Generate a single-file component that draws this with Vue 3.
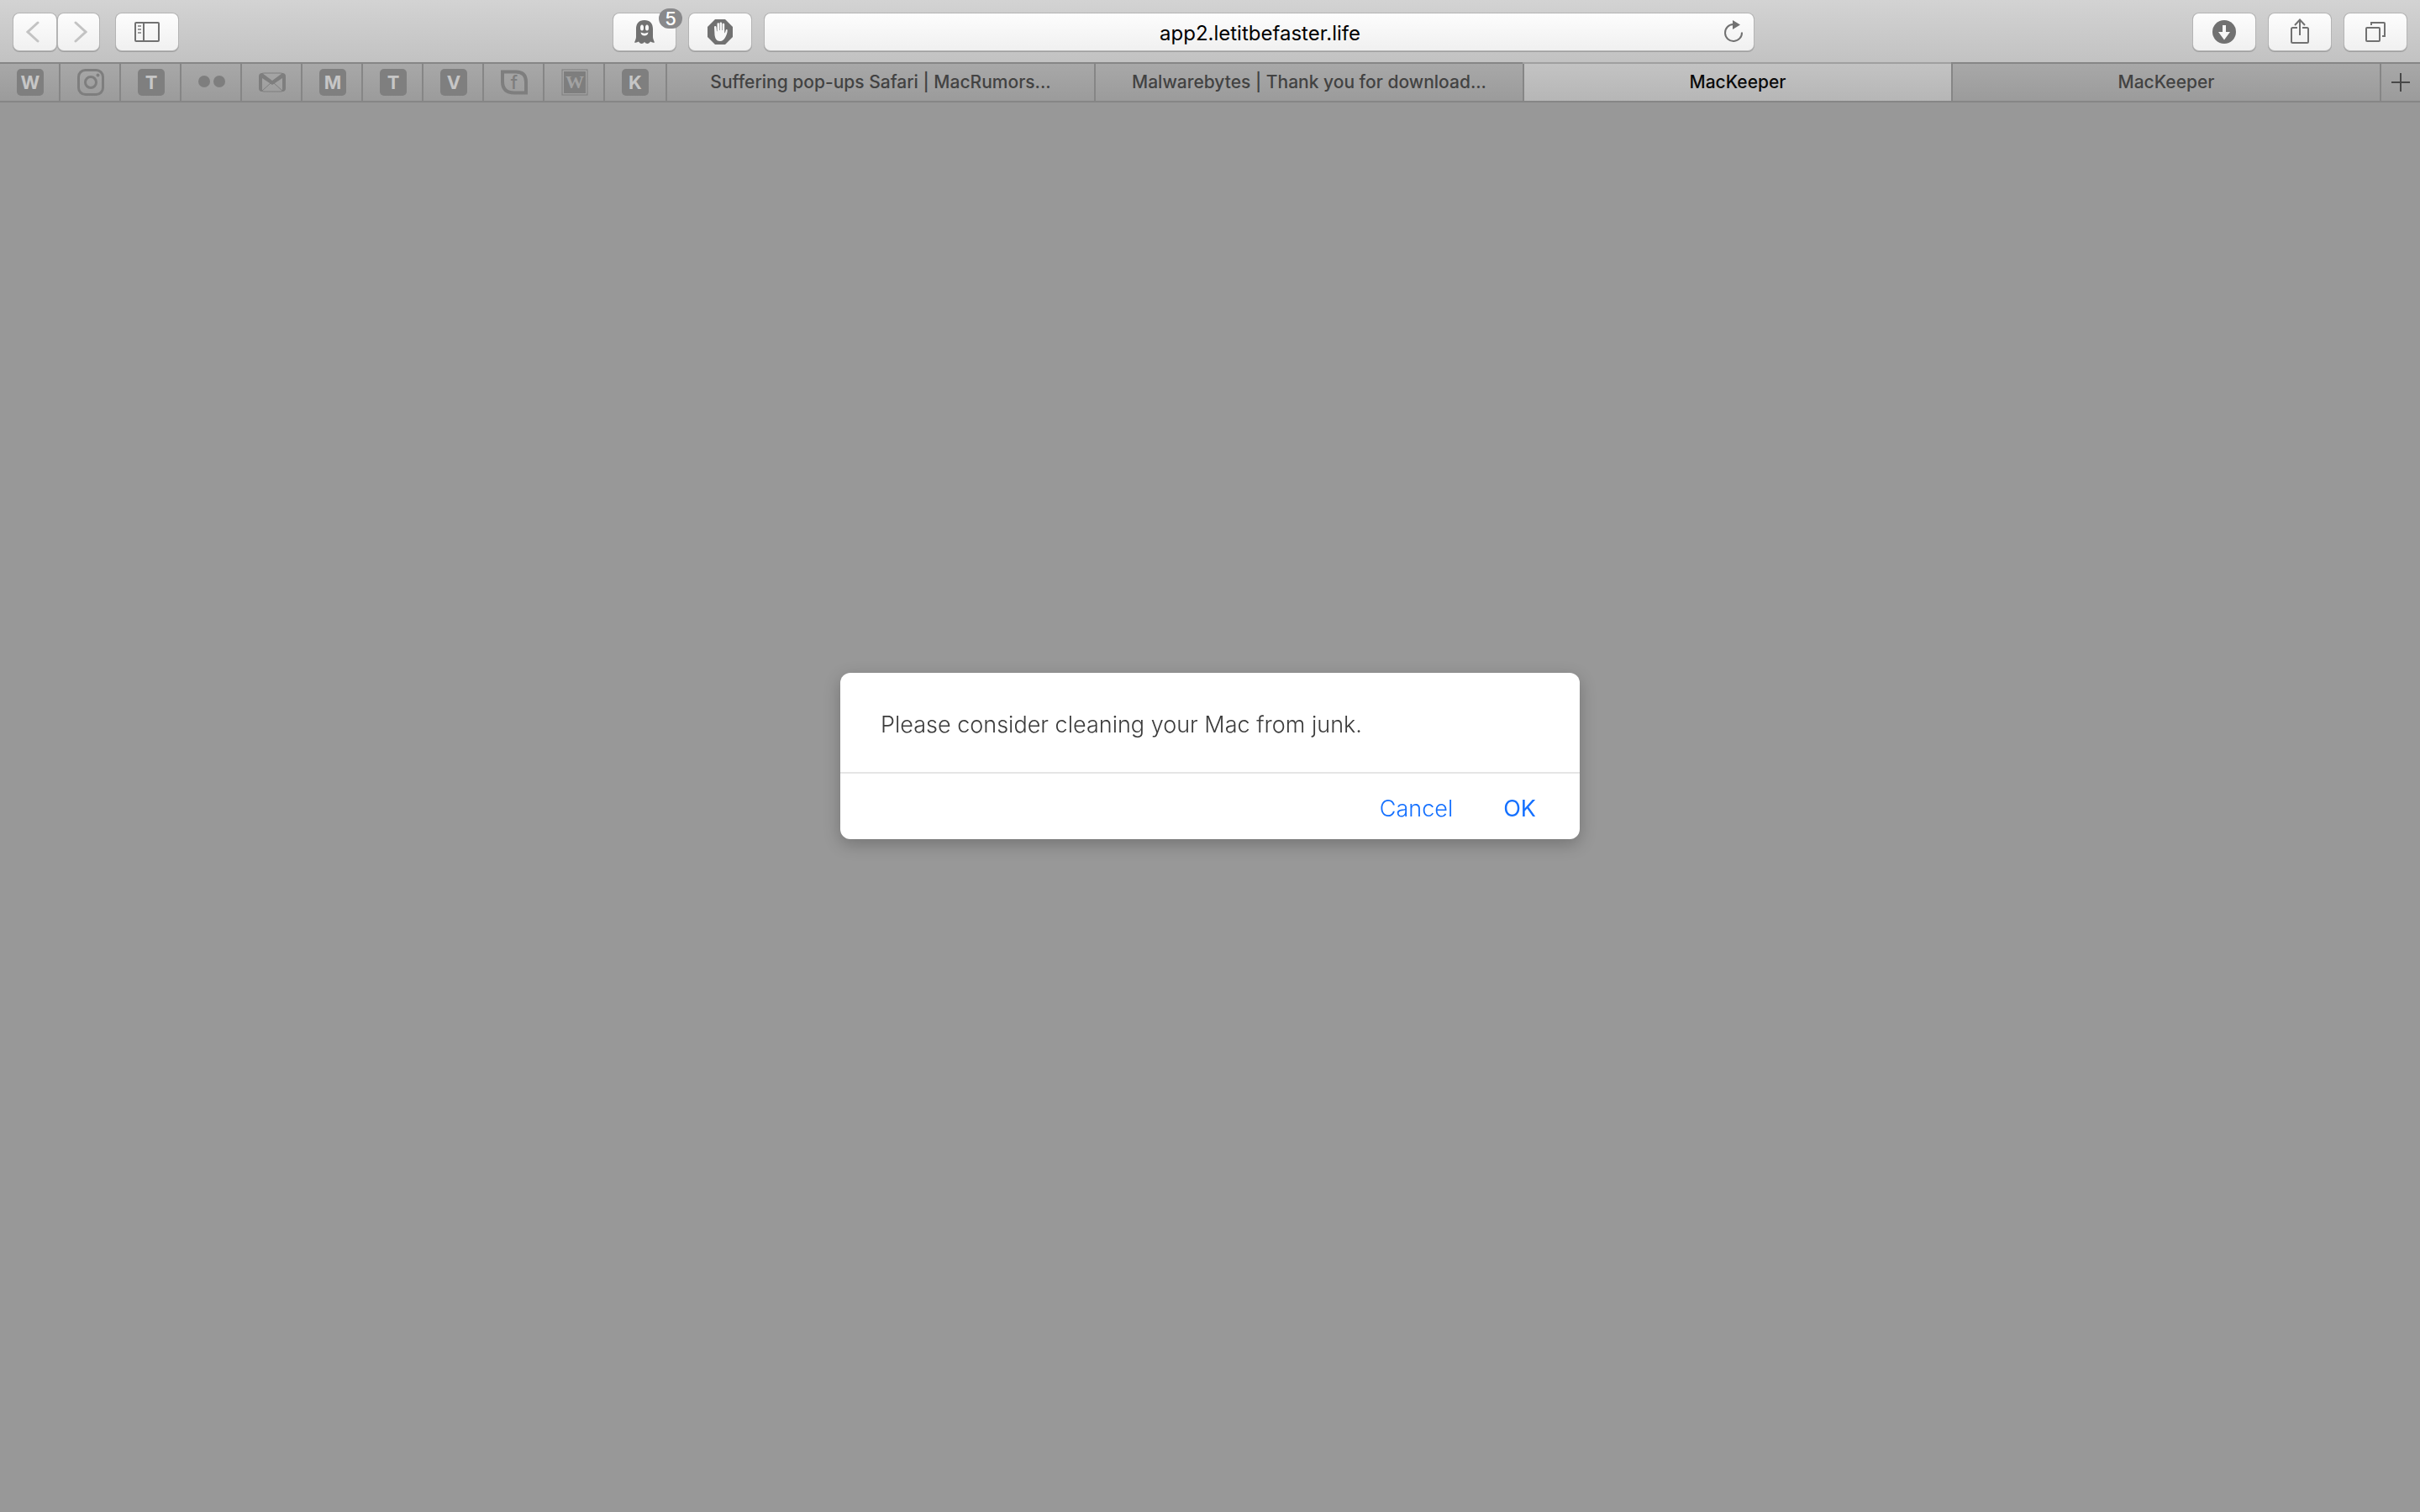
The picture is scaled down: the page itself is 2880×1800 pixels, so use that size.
<template>
  <div class="browser">
    <header class="toolbar">
      <div class="group left">
        <div class="history">
          <button class="btn back" aria-label="Back">
            <svg width="16" height="26" viewBox="0 0 16 26"><path class="chevron" d="M14 2 2 13l12 11" /></svg>
          </button>
          <button class="btn forward" aria-label="Forward">
            <svg width="16" height="26" viewBox="0 0 16 26"><path class="chevron" d="M2 2l12 11L2 24" /></svg>
          </button>
        </div>
        <button class="btn" aria-label="Sidebar">
          <svg width="30" height="24" viewBox="0 0 30 24">
            <rect class="line" x="1" y="1" width="28" height="22" rx="1" />
            <path class="line" d="M11 1v22" />
            <path class="line faint" d="M4 5h4M4 9h4M4 13h4" />
          </svg>
        </button>
      </div>

      <div class="group middle">
        <button class="btn" aria-label="Ghostery, 5 trackers">
          <svg width="24" height="28" viewBox="0 0 24 28">
            <path
              class="solid"
              d="M12 0C5.500 0 2 4 2 10.500V20c0 2-1 4-2 6.500 2 .5 3.500 0 5-1 1 1.500 2 2.500 3.500 2.500 1.500 0 2.500-.8 3.500-2 1 1.200 2 2 3.500 2S18 27 19 25.500c1.500 1 3 1.500 5 1-1-2.500-2-4.500-2-6.500v-9.500C22 4 18.500 0 12 0z"
            />
            <ellipse class="hole" cx="9" cy="9" rx="2" ry="3.500" />
            <ellipse class="hole" cx="15" cy="9" rx="2" ry="3.500" />
            <path class="hole" d="M7.500 14.500c3 1.500 6 1.500 9 0-.3 2.500-2 4-4.500 4s-4.200-1.500-4.500-4z" />
          </svg>
          <span class="badge">5</span>
        </button>
        <button class="btn" aria-label="AdBlock">
          <svg width="30" height="30" viewBox="0 0 30 30">
            <path class="solid" d="M9 0h12l9 9v12l-9 9H9l-9-9V9z" />
            <path
              class="hole"
              d="M8 9.200c0-1.700 2.300-1.700 2.500 0l.5 5h.5V5.500c0-1.800 2.500-1.800 2.500 0V13h.6V4.800c0-1.800 2.500-1.800 2.500 0V13h.6V6c0-1.800 2.500-1.800 2.500 0v10.500c.8-.5 1.200-1.800 1.500-3.200.4-1.700 1.800-1.700 2-.5.1 3-1 6-2.700 9-1.500 2.700-3.200 4.200-6 4.200-4.500 0-6-3.500-6.500-7.500z"
            />
          </svg>
        </button>
        <div class="address">
          <input v-model="url" type="text" aria-label="Address" spellcheck="false" />
          <button class="reload" aria-label="Reload">
            <svg width="24" height="28" viewBox="0 0 24 28">
              <path class="line" d="M22 14.500A10 10 0 1 1 11.500 5" />
              <path class="solid" d="M11 0l9 5.500-9 5.500z" />
            </svg>
          </button>
        </div>
      </div>

      <div class="group">
        <button class="btn" aria-label="Downloads">
          <svg width="28" height="28" viewBox="0 0 28 28">
            <circle class="solid" cx="14" cy="14" r="14" />
            <path class="hole" d="M12 6h4v8h5l-7 9.500L7 14h5z" />
          </svg>
        </button>
        <button class="btn" aria-label="Share">
          <svg width="22" height="32" viewBox="0 0 22 32">
            <path class="line" d="M8 11H2.500Q1 11 1 12.500v15Q1 29 2.500 29h17q1.500 0 1.500-1.500v-15Q21 11 19.500 11H14" />
            <path class="line" d="M11 20V2M5 8l6-6.500L17 8" />
          </svg>
        </button>
        <button class="btn" aria-label="Show all tabs">
          <svg width="24" height="24" viewBox="0 0 24 24">
            <rect class="line" x="1" y="7" width="16" height="16" rx="1" />
            <path class="line" d="M7 4V1h15q1 0 1 1v15h-3" />
          </svg>
        </button>
      </div>
    </header>

    <nav class="tabbar">
      <div class="pins">
        <button v-for="(pin, i) in pins" :key="i" class="pin" :aria-label="pin.name">
          <span v-if="pin.letter" class="letter">{{ pin.letter }}</span>
          <svg v-else-if="pin.icon === 'instagram'" width="32" height="32" viewBox="0 0 32 32">
            <rect class="mark" x="1.500" y="1.500" width="29" height="29" rx="8" />
            <circle class="mark" cx="16" cy="16" r="6.500" />
            <circle class="fill" cx="24.500" cy="7.500" r="2" />
          </svg>
          <svg v-else-if="pin.icon === 'flickr'" width="32" height="16" viewBox="0 0 32 16">
            <circle class="fill" cx="7" cy="7" r="7" />
            <circle class="fill" cx="25" cy="7" r="7" />
          </svg>
          <svg v-else-if="pin.icon === 'mail'" width="32" height="24" viewBox="0 0 32 24">
            <rect class="mark thin" x="1" y="1" width="30" height="22" rx="5" />
            <path class="fill" d="M4 1a4 4 0 0 0-4 4v14a4 4 0 0 0 4 4V7l12 8 12-8v16a4 4 0 0 0 4-4V5a4 4 0 0 0-4-4L16 10z" />
            <path class="mark thin" d="M4 22l10-9M28 22l-10-9" />
          </svg>
          <svg v-else-if="pin.icon === 'leaf'" width="32" height="30" viewBox="0 0 32 30">
            <path class="mark leaf" d="M2 2.500H18q12 0 12 12V27.500H16Q2 27.500 2 14z" />
            <text class="leaf-f" x="16" y="23">f</text>
          </svg>
          <svg v-else width="32" height="32" viewBox="0 0 32 32">
            <rect class="mark thin" x="1" y="1" width="30" height="30" />
            <rect class="fill" x="3" y="3" width="26" height="26" />
            <text class="serif-w" x="16" y="23">W</text>
          </svg>
        </button>
      </div>
      <button
        v-for="(tab, i) in tabs"
        :key="i"
        class="tab"
        :class="{ active: i === current }"
        @click="current = i"
      >{{ tab }}</button>
      <button class="add" aria-label="New tab">
        <svg width="22" height="22" viewBox="0 0 22 22"><path class="plus" d="M11 0v22M0 11h22" /></svg>
      </button>
    </nav>

    <main class="page">
      <div v-if="open" class="overlay">
        <div class="dialog" role="alertdialog" aria-labelledby="message">
          <p id="message">Please consider cleaning your Mac from junk.</p>
          <div class="actions">
            <button @click="open = false">Cancel</button>
            <button class="ok" @click="open = false">OK</button>
          </div>
        </div>
      </div>
    </main>
  </div>
</template>

<script setup>
import { ref } from "vue"

const url = ref("app2.letitbefaster.life")
const current = ref(2)
const open = ref(true)

const pins = [
  { name: "W", letter: "W" },
  { name: "Instagram", icon: "instagram" },
  { name: "T", letter: "T" },
  { name: "Flickr", icon: "flickr" },
  { name: "Mail", icon: "mail" },
  { name: "M", letter: "M" },
  { name: "T", letter: "T" },
  { name: "V", letter: "V" },
  { name: "F", icon: "leaf" },
  { name: "W", icon: "serif" },
  { name: "K", letter: "K" }
]

const tabs = [
  "Suffering pop-ups Safari | MacRumors...",
  "Malwarebytes | Thank you for download...",
  "MacKeeper",
  "MacKeeper"
]
</script>

<style>
body {
  margin: 0;
  background: #989898;
}
</style>

<style scoped>
.browser {
  min-height: 100vh;
  display: flex;
  flex-direction: column;
  font-family: Inter, "Liberation Sans", sans-serif;
}

button,
input {
  font-family: inherit;
  margin: 0;
  padding: 0;
  border: none;
  background: none;
}

svg {
  display: block;
  fill: none;
}

.toolbar {
  box-sizing: border-box;
  height: 74px;
  padding: 0 16px;
  display: flex;
  align-items: center;
  justify-content: space-between;
  background: linear-gradient(#d3d3d3, #c2c2c2);
}

.group {
  display: flex;
  gap: 16px;
  padding-top: 2px;
}

.left {
  gap: 20px;
}

.middle {
  flex: 0 1 1357px;
  padding-right: 5px;
}

.history {
  display: flex;
  gap: 2px;
}

.btn,
.address {
  height: 44px;
  border-radius: 7px;
  background: linear-gradient(#fdfdfd, #f0f0f0);
  box-shadow: 0 0 0 1px #b4b4b4, 0 1px 0 1px #a0a0a0;
}

.btn {
  position: relative;
  flex: none;
  width: 74px;
  display: flex;
  align-items: center;
  justify-content: center;
}

.back,
.forward {
  box-sizing: border-box;
}

.back {
  width: 51px;
  padding-right: 6px;
}

.forward {
  width: 49px;
  padding-left: 4px;
}

.line {
  stroke: #717171;
  stroke-width: 2;
}

.faint {
  stroke: #9a9a9a;
}

.chevron {
  stroke: #c3c3c3;
  stroke-width: 3;
  stroke-linecap: round;
}

.solid {
  fill: #717171;
}

.hole {
  fill: #f8f8f8;
}

.badge {
  position: absolute;
  top: -6px;
  right: -8px;
  width: 28px;
  height: 24px;
  border-radius: 12px;
  background: #89898b;
  color: #fff;
  font-size: 22px;
  font-weight: 500;
  line-height: 24px;
  text-align: center;
}

.address {
  position: relative;
  flex: 1;
  min-width: 0;
}

.address input {
  box-sizing: border-box;
  width: 100%;
  height: 44px;
  padding: 2px 0 0 2px;
  color: #000;
  font-size: 24px;
  text-align: center;
  outline: none;
}

.reload {
  position: absolute;
  top: 8px;
  right: 12px;
}

.tabbar {
  display: flex;
  height: 44px;
  border-top: 2px solid #868686;
  border-bottom: 2px solid #868686;
  background: linear-gradient(#a8a8a8, #9b9b9b);
}

.pins {
  display: flex;
}

.pin {
  flex: none;
  width: 72px;
  display: flex;
  align-items: center;
  justify-content: center;
  box-shadow: inset -2px 0 #868686;
}

.pin:last-child {
  box-shadow: none;
}

.letter {
  width: 32px;
  height: 32px;
  border-radius: 5px;
  background: #7f7f7f;
  color: #c6c6c6;
  font-size: 22px;
  font-weight: 700;
  line-height: 32px;
  text-align: center;
}

.mark {
  stroke: #7e7e7e;
  stroke-width: 3;
}

.thin {
  stroke-width: 1;
}

.leaf {
  stroke-width: 4;
}

.fill {
  fill: #7e7e7e;
}

.leaf-f,
.serif-w {
  text-anchor: middle;
  font-size: 22px;
  font-weight: 500;
  fill: #7e7e7e;
}

.serif-w {
  font-family: "Liberation Serif", serif;
  font-weight: 700;
  fill: #a2a2a2;
}

.tab {
  flex: 1;
  min-width: 0;
  padding: 0 20px;
  border-left: 2px solid #868686;
  color: #424242;
  font-size: 21px;
  font-weight: 500;
  line-height: 44px;
  white-space: nowrap;
  overflow: hidden;
  text-overflow: ellipsis;
}

.tab.active {
  background: linear-gradient(#c3c3c3, #b6b6b6);
  background-clip: padding-box;
  box-shadow: 0 -2px #a0a0a0;
  color: #0a0a0a;
}

.add {
  flex: none;
  width: 48px;
  border-left: 2px solid #868686;
  display: flex;
  align-items: center;
  justify-content: center;
}

.plus {
  stroke: #484848;
  stroke-width: 2;
}

.page {
  flex: 1;
  background: #989898;
}

.overlay {
  position: fixed;
  inset: 0;
  display: flex;
  align-items: center;
  justify-content: center;
}

.dialog {
  width: 880px;
  max-width: 90%;
  border-radius: 12px;
  background: #fff;
  box-shadow: 0 6px 20px rgba(0, 0, 0, 0.24);
}

.dialog p {
  margin: 0;
  padding: 44px 48px 38px;
  border-bottom: 2px solid #e5e5e5;
  color: #3c3c3c;
  font-size: 27px;
  font-weight: 300;
  line-height: 36px;
}

.actions {
  display: flex;
  justify-content: flex-end;
  gap: 60px;
  padding: 24px 52px 18px;
}

.actions button {
  color: #1470ff;
  font-size: 27px;
  font-weight: 300;
  line-height: 36px;
}

.actions .ok {
  font-weight: 400;
}
</style>
